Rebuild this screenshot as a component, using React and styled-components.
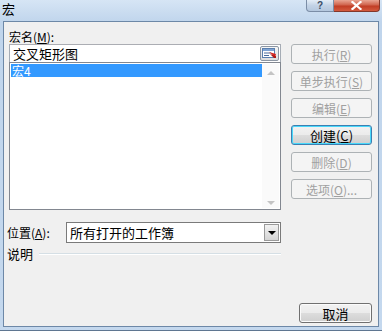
import styled, { createGlobalStyle } from "styled-components";

const GlobalStyle = createGlobalStyle`
  html, body { margin: 0; padding: 0; background: #fff; }
  body {
    font-family: "Noto Sans CJK SC", "Liberation Sans", sans-serif;
    font-size: 12px;
    color: #000;
  }
`;

const Window = styled.div`
  width: 382px;
  height: 331px;
  box-sizing: border-box;
  display: flex;
  flex-direction: column;
  padding: 0 3px 3px 3px;
  background: linear-gradient(#d6e5f5, #c0d5ec 22px, #c4d8ee);
  border-bottom: 1px solid #5f7691;
`;

const TitleBar = styled.div`
  height: 21px;
  display: flex;
  align-items: flex-start;
  justify-content: space-between;
`;

const Title = styled.span`
  font-size: 13px;
  line-height: 18px;
  margin-left: -1px;
  color: #000;
`;

const CaptionButtons = styled.div`
  display: flex;
  margin-right: -1px;
`;

const HelpBtn = styled.div`
  width: 28px;
  height: 12px;
  box-sizing: border-box;
  border: 1px solid #7b8da6;
  border-top: none;
  border-radius: 0 0 0 4px;
  background: linear-gradient(#e4edf7, #c3d3e6 50%, #b4c7de);
  display: flex;
  align-items: center;
  justify-content: center;
  font-family: "Liberation Sans", sans-serif;
  font-size: 10px;
  font-weight: bold;
  color: #3b4d66;
  line-height: 1;
`;

const CloseBtn = styled.div`
  width: 46px;
  height: 12px;
  box-sizing: border-box;
  border: 1px solid #83372a;
  border-top: none;
  border-left: none;
  border-radius: 0 0 4px 0;
  background: linear-gradient(#e9a593, #d0644d 45%, #c13d25 55%, #d35a3e);
  display: flex;
  align-items: center;
  justify-content: center;
`;

const Client = styled.div`
  flex: 1;
  box-sizing: border-box;
  border: 1px solid #6d88a7;
  background: #f0f0f0;
  display: grid;
  grid-template-columns: 272px 81px;
  column-gap: 10px;
  padding: 8px 4px 3px 5px;
`;

const LeftPane = styled.div`
  display: flex;
  flex-direction: column;
`;

const FieldLabel = styled.div`
  height: 14px;
  line-height: 14px;
  white-space: nowrap;
`;

const Accel = styled.u`
  text-decoration: underline;
  text-underline-offset: 1px;
`;

const NameInput = styled.div`
  height: 19px;
  box-sizing: border-box;
  border: 1px solid #a5acb5;
  border-top-color: #abadb3;
  background: #fff;
  display: flex;
  align-items: center;
  justify-content: space-between;
  padding: 0 1px 0 3px;
  font-size: 13px;
`;

const RefButton = styled.div`
  width: 19px;
  height: 15px;
  box-sizing: border-box;
  border: 1px solid #8c96a3;
  border-radius: 2px;
  background: linear-gradient(#f6f6f6, #dedede);
  display: flex;
  align-items: center;
  justify-content: center;
`;

const MacroList = styled.div`
  height: 148px;
  margin-top: -1px;
  box-sizing: border-box;
  border: 1px solid #828790;
  background: #fff;
  display: flex;
  padding: 1px;
`;

const ListItems = styled.div`
  flex: 1;
`;

const ListItem = styled.div`
  height: 13px;
  line-height: 13px;
  padding-left: 1px;
  background: ${(p) => (p.selected ? "#3399ff" : "transparent")};
  color: ${(p) => (p.selected ? "#fff" : "#000")};
`;

const ScrollBar = styled.div`
  width: 17px;
  display: flex;
  flex-direction: column;
  justify-content: space-between;
  align-items: center;
  background: #fafafa;
  padding: 7px 0 3px;
`;

const ScrollArrow = styled.div`
  width: 0;
  height: 0;
  border-left: 4px solid transparent;
  border-right: 4px solid transparent;
  ${(p) =>
    p.down
      ? "border-top: 4px solid #c4c4c4;"
      : "border-bottom: 4px solid #c4c4c4;"}
`;

const LocationRow = styled.div`
  margin-top: 12px;
  display: flex;
  align-items: center;
  margin-left: -2px;
`;

const RowLabel = styled.div`
  width: 59px;
  white-space: nowrap;
`;

const Combo = styled.div`
  flex: 1;
  height: 21px;
  box-sizing: border-box;
  border: 1px solid #7a7a7a;
  background: #fff;
  display: flex;
  align-items: center;
  justify-content: space-between;
  padding: 0 1px 0 3px;
  font-size: 13px;
`;

const ComboArrow = styled.div`
  width: 15px;
  height: 17px;
  box-sizing: border-box;
  border: 1px solid #9a9a9a;
  background: linear-gradient(#f2f2f2, #d4d4d4);
  display: flex;
  align-items: center;
  justify-content: center;

  &::after {
    content: "";
    border-left: 4px solid transparent;
    border-right: 4px solid transparent;
    border-top: 4px solid #000;
  }
`;

const DescRow = styled.div`
  margin-top: 3px;
  margin-left: -2px;
  display: flex;
  align-items: center;
  gap: 6px;
  font-size: 13px;
  line-height: 15px;
`;

const DescLine = styled.div`
  flex: 1;
  height: 0;
  border-top: 1px solid #d5dfe5;
  border-bottom: 1px solid #fff;
`;

const ButtonColumn = styled.div`
  display: flex;
  flex-direction: column;
  align-items: flex-end;
  gap: 7px;
  padding-top: 14px;
`;

const DlgButton = styled.div`
  width: ${(p) => (p.narrow ? "73px" : "81px")};
  height: 20px;
  box-sizing: border-box;
  border-radius: 3px;
  display: flex;
  align-items: center;
  justify-content: center;
  white-space: nowrap;
  font-size: ${(p) => (p.disabled ? "12px" : "13px")};
  border: 1px solid ${(p) => (p.disabled ? "#adb2b5" : p.isDefault ? "#3c7fb1" : "#707070")};
  color: ${(p) => (p.disabled ? "#a0a0a0" : "#000")};
  background: ${(p) =>
    p.disabled
      ? "#f4f4f4"
      : "linear-gradient(#f2f2f2, #ebebeb 50%, #dddddd 51%, #cfcfcf)"};
  box-shadow: ${(p) =>
    p.isDefault ? "inset 0 0 0 1px #48d8fb" : p.disabled ? "none" : "inset 0 0 0 1px #fbfbfb"};
  ${(p) => p.pushDown && "margin-top: auto;"}
`;

function RefIcon() {
  return (
    <svg width="15" height="11" viewBox="0 0 15 11">
      <rect x="0.5" y="0.5" width="12" height="9" fill="#fff" stroke="#5b7fae" />
      <rect x="1" y="1" width="11" height="2" fill="#7ea3d3" />
      <line x1="2" y1="5" x2="9" y2="5" stroke="#4a6c9c" />
      <line x1="2" y1="7.5" x2="7" y2="7.5" stroke="#4a6c9c" />
      <path d="M7 4 L13 9 L14 6 Z" fill="#d8231f" />
      <path d="M8 6 L12 10 L14 10 L14 8 Z" fill="#b01814" />
    </svg>
  );
}

function CloseGlyph() {
  return (
    <svg width="11" height="9" viewBox="0 0 11 9">
      <path d="M1.5 1 L9.5 8 M9.5 1 L1.5 8" stroke="#fff" strokeWidth="2.2" strokeLinecap="square" />
    </svg>
  );
}

export default function App() {
  return (
    <>
      <GlobalStyle />
      <Window>
        <TitleBar>
          <Title>宏</Title>
          <CaptionButtons>
            <HelpBtn>?</HelpBtn>
            <CloseBtn>
              <CloseGlyph />
            </CloseBtn>
          </CaptionButtons>
        </TitleBar>

        <Client>
          <LeftPane>
            <FieldLabel>
              宏名(<Accel>M</Accel>):
            </FieldLabel>
            <NameInput>
              <span>交叉矩形图</span>
              <RefButton>
                <RefIcon />
              </RefButton>
            </NameInput>
            <MacroList>
              <ListItems>
                <ListItem selected>宏4</ListItem>
              </ListItems>
              <ScrollBar>
                <ScrollArrow />
                <ScrollArrow down />
              </ScrollBar>
            </MacroList>

            <LocationRow>
              <RowLabel>
                位置(<Accel>A</Accel>):
              </RowLabel>
              <Combo>
                <span>所有打开的工作簿</span>
                <ComboArrow />
              </Combo>
            </LocationRow>

            <DescRow>
              <span>说明</span>
              <DescLine />
            </DescRow>
          </LeftPane>

          <ButtonColumn>
            <DlgButton disabled>
              执行(<Accel>R</Accel>)
            </DlgButton>
            <DlgButton disabled>
              单步执行(<Accel>S</Accel>)
            </DlgButton>
            <DlgButton disabled>
              编辑(<Accel>E</Accel>)
            </DlgButton>
            <DlgButton isDefault>
              创建(<Accel>C</Accel>)
            </DlgButton>
            <DlgButton disabled>
              删除(<Accel>D</Accel>)
            </DlgButton>
            <DlgButton disabled>
              选项(<Accel>O</Accel>)...
            </DlgButton>
            <DlgButton narrow pushDown>
              取消
            </DlgButton>
          </ButtonColumn>
        </Client>
      </Window>
    </>
  );
}
